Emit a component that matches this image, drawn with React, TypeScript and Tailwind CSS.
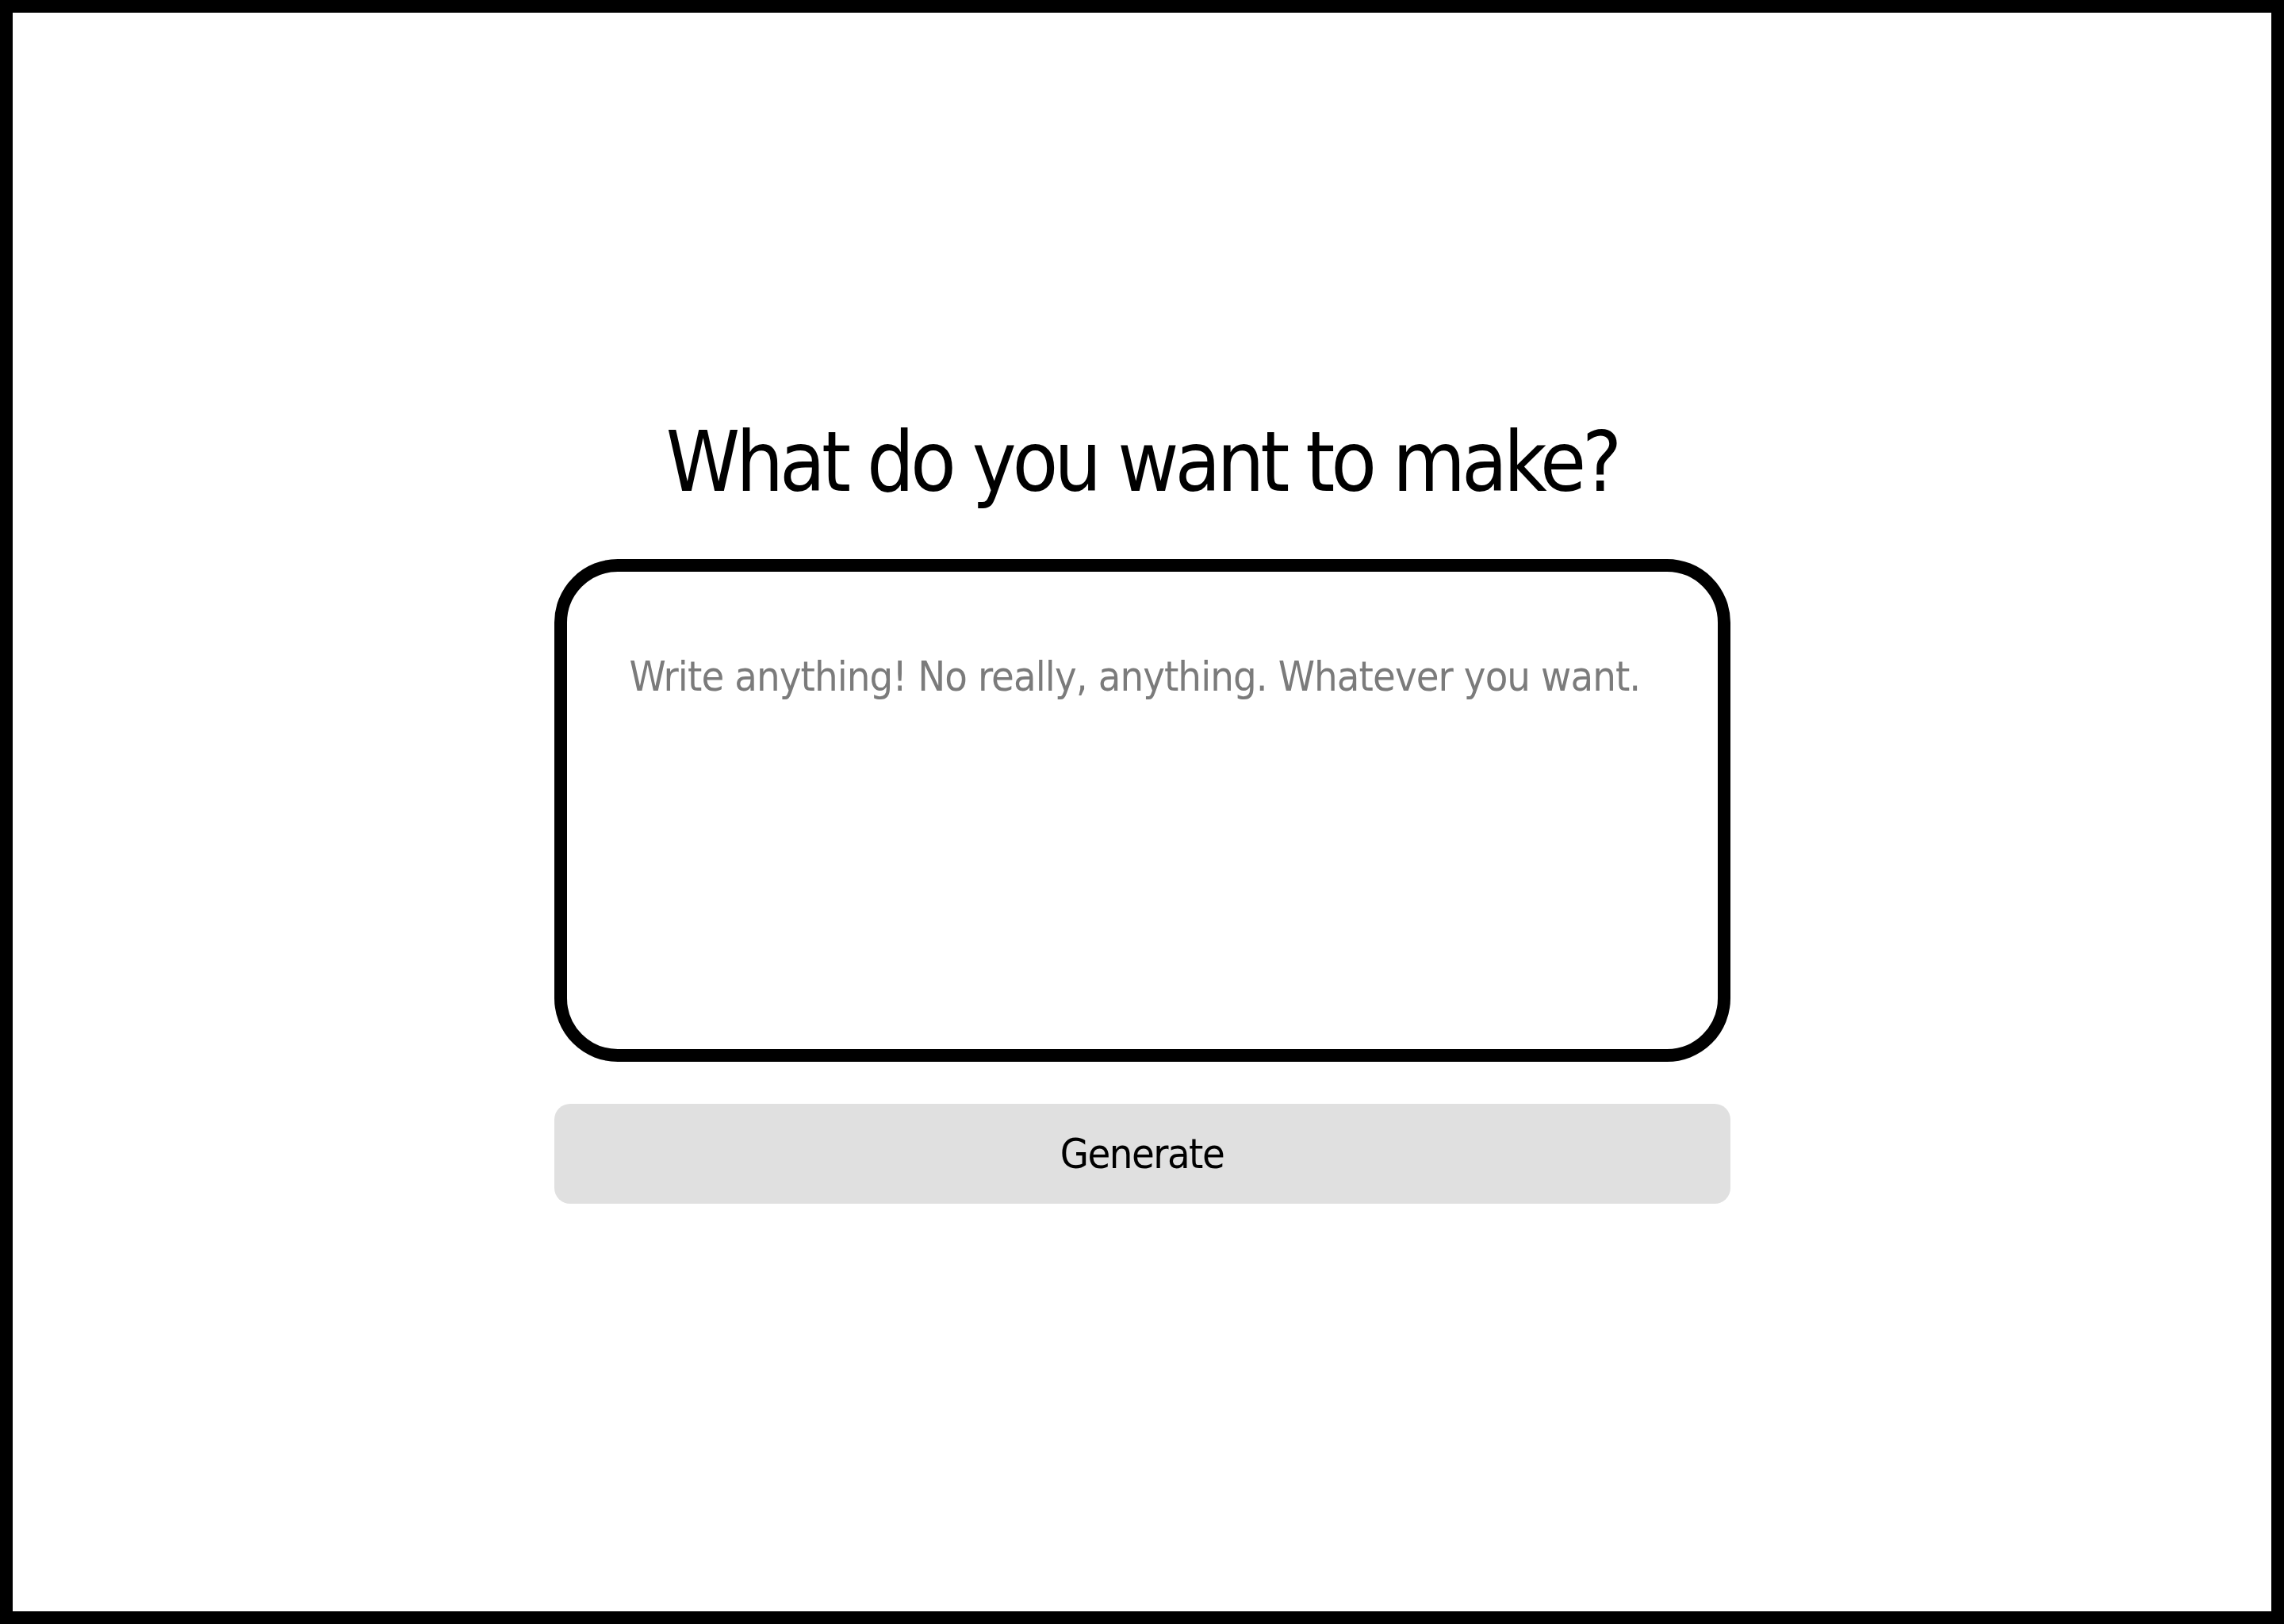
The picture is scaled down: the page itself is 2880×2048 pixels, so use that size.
import React from "react";

export default function App() {
  return (
    <div className="w-[2880px] h-[2048px] bg-white border-[16px] border-black font-['Liberation_Sans_Narrow','DejaVu_Sans_Condensed','Liberation_Sans',sans-serif]">
      <div className="flex flex-col items-center pt-[515px]">
        <h1 className="text-[105px] leading-none tracking-[-5px] text-black text-center">What do you want to make?</h1>
        <div className="mt-[69px] w-[1483px] flex flex-col">
          <textarea
            className="h-[634px] w-full resize-none rounded-[80px] border-[16px] border-black bg-white pl-[79px] pr-[40px] pt-[101px] text-[52px] leading-[1.2] tracking-[-0.9px] text-black outline-none placeholder:text-[#7b7b7b]"
            placeholder="Write anything! No really, anything. Whatever you want."
          />
          <button className="mt-[53px] h-[126px] w-full rounded-[20px] bg-[#e0e0e0] text-[52px] tracking-[-1.5px] text-black">
            Generate
          </button>
        </div>
      </div>
    </div>
  );
}
